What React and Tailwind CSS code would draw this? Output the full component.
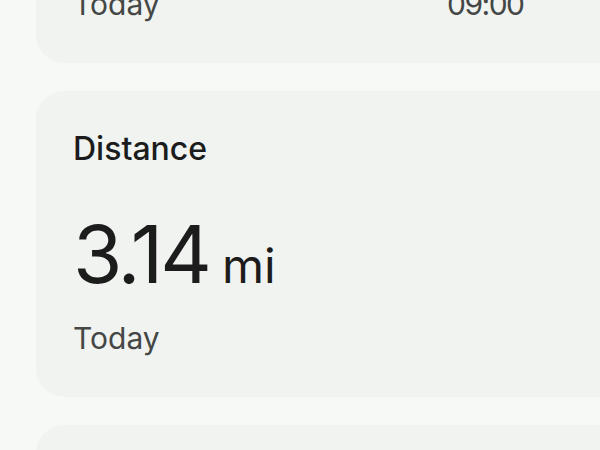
export default function App() {
  return (
    <div
      className="h-[450px] w-[600px] overflow-hidden bg-[#f7f9f7]"
      style={{ fontFamily: "Inter, 'Noto Sans', sans-serif" }}
    >
      <div className="-mt-[38px] flex w-[660px] flex-col gap-[28px] pl-[36px]">
        {/* previous card, scrolled mostly out of view */}
        <div className="rounded-[28px] bg-[#f1f3f1] px-[37px] pt-[24px] pb-[41px]">
          <div className="flex items-baseline text-[30px] leading-[36px] text-[#444746]">
            <span className="w-[374px]">Today</span>
            <span className="tracking-[-1.5px]">09:00</span>
          </div>
        </div>

        <div className="rounded-[28px] bg-[#f1f3f1] px-[37px] pt-[38px] pb-[41px]">
          <div className="text-[32px] font-medium leading-[40px] text-[#1b1c1b]">
            Distance
          </div>
          <div className="mt-[45px] flex h-[80px] items-baseline text-[#1b1c1b]">
            <span className="text-[80px] leading-[80px] tracking-[-3px]">3.14</span>
            <span className="ml-[13px] text-[48px] leading-[48px]">mi</span>
          </div>
          <div className="mt-[26px] text-[30px] leading-[36px] text-[#444746]">Today</div>
        </div>

        <div className="h-[200px] rounded-[28px] bg-[#f1f3f1]" />
      </div>
    </div>
  );
}
